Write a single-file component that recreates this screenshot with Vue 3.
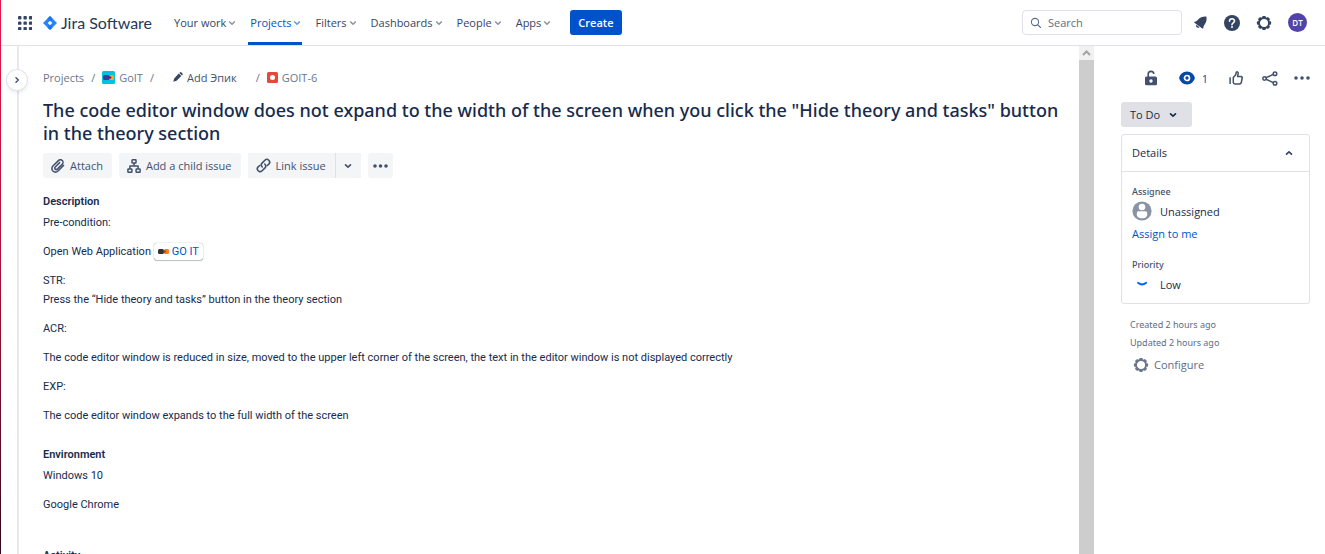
<script setup>
const nav = [
  { label: 'Your work' },
  { label: 'Projects', active: true },
  { label: 'Filters' },
  { label: 'Dashboards' },
  { label: 'People' },
  { label: 'Apps' },
]
const dots = [5, 12, 19]
const teeth = [0, 45, 90, 135, 180, 225, 270, 315]
</script>

<template>
  <div class="page">
    <header class="topbar">
      <button class="plain switcher" aria-label="App switcher">
        <svg width="14" height="14" viewBox="3 3 18 18">
          <template v-for="y in dots" :key="y">
            <rect v-for="x in dots" :key="x" :x="x - 2" :y="y - 2" width="4.4" height="4.4" rx="1.2" fill="#344563" />
          </template>
        </svg>
      </button>
      <a class="logo" href="#">
        <svg width="14" height="14" viewBox="0 0 14 14">
          <path d="M7 0 14 7 7 14 0 7Z" fill="#2684ff" />
          <path d="M7 0 4.4 2.6 7 5.2 9.6 2.6ZM7 14 9.6 11.4 7 8.8 4.4 11.4Z" fill="#1f74f2" />
          <path d="M7 4.7 9.3 7 7 9.3 4.7 7Z" fill="#fff" />
        </svg>
        <span>Jira Software</span>
      </a>
      <nav>
        <button v-for="n in nav" :key="n.label" class="plain nav-item" :class="{ active: n.active }">
          {{ n.label }}
          <svg width="8" height="6" viewBox="0 0 8 6"><path d="M1.2 1.500 4 4.300 6.800 1.500" /></svg>
        </button>
      </nav>
      <button class="create">Create</button>
      <label class="search">
        <svg width="12" height="12" viewBox="0 0 12 12" fill="none" stroke="#5e6c84" stroke-width="1.1" stroke-linecap="round">
          <circle cx="5" cy="5" r="3.6" /><path d="M7.8 7.8 10.5 10.5" />
        </svg>
        <input type="text" placeholder="Search" aria-label="Search" />
      </label>
      <div class="tools">
        <button class="plain" aria-label="Notifications">
          <svg width="15" height="15" viewBox="0 0 16 16" fill="#344563">
            <path d="M14.200 1.600C10.800 1.300 7.500 2.400 5.400 4.700 4 6.300 3.600 6.700 1.700 7.200 1.200 7.400 1.100 7.900 1.500 8.300L9.900 14.300C10.400 14.600 10.900 14.300 11 13.800 11.200 12 11.500 11.300 12.600 9.800 14.300 7.300 15 4.500 14.200 1.600Z" />
            <path d="M3.500 10.500 7 13C5.800 14 4.300 13.800 3.600 12.800 3.100 12.100 3.100 11.300 3.500 10.500Z" />
          </svg>
        </button>
        <button class="plain" aria-label="Help">
          <svg width="16" height="16" viewBox="0 0 16 16">
            <circle cx="8" cy="8" r="8" fill="#344563" />
            <path d="M5.500 6.300C5.500 2.900 10.500 3 10.500 6.100 10.500 8 8 7.900 8 9.700" fill="none" stroke="#fff" stroke-width="1.600" stroke-linecap="round" />
            <circle cx="8" cy="12.100" r="1" fill="#fff" />
          </svg>
        </button>
        <button class="plain" aria-label="Settings">
          <svg width="16" height="16" viewBox="0 0 16 16">
            <rect v-for="t in teeth" :key="t" x="6.200" y="0.900" width="3.600" height="2.600" rx="1" fill="#344563" :transform="`rotate(${t} 8 8)`" />
            <circle cx="8" cy="8" r="5" fill="none" stroke="#344563" stroke-width="1.900" />
          </svg>
        </button>
        <button class="avatar">DT</button>
      </div>
    </header>

    <div class="body">
      <div class="rail">
        <button class="expand" aria-label="Expand sidebar">
          <svg width="8" height="8" viewBox="0 0 8 8" fill="none" stroke="#42526e" stroke-width="1.500" stroke-linecap="round" stroke-linejoin="round"><path d="M3 1.700 5.300 4 3 6.300" /></svg>
        </button>
      </div>

      <main>
        <div class="crumbs">
          <a href="#">Projects</a>
          <i>/</i>
          <a href="#" class="project">
            <svg width="13" height="13" viewBox="0 0 13 13">
              <rect width="13" height="13" rx="1.500" fill="#00c1e0" />
              <rect x="1" y="4" width="7" height="5" rx="1.500" fill="#4137a8" />
              <rect x="7" y="4" width="5" height="5" rx="1.500" fill="#ffab00" />
              <circle cx="8" cy="6.500" r="1.300" fill="#5a2630" />
            </svg>
            GoIT
          </a>
          <i>/</i>
          <button class="plain epic">
            <svg width="10" height="10" viewBox="0 0 10 10" fill="#344563"><path d="M5.800 1.500 8.300 4 3.500 8.800 0.300 9.700 1.200 6.500ZM6.400 0.900 7.100 0.300Q7.700 -0.100 8.200 0.300L9.600 1.700Q10 2.300 9.600 2.800L8.900 3.400Z" /></svg>
            Add Эпик
          </button>
          <i>/</i>
          <a href="#" class="key">
            <svg width="11" height="11" viewBox="0 0 11 11"><rect width="11" height="11" rx="1.500" fill="#e5493a" /><circle cx="5.500" cy="5.500" r="2.500" fill="#fff" /></svg>
            GOIT-6
          </a>
        </div>

        <h1>The code editor window does not expand to the width of the screen when you click the "Hide theory and tasks" button in the theory section</h1>

        <div class="actions">
          <button class="act">
            <svg width="14" height="14" viewBox="0 0 14 14" fill="none" stroke="#42526e" stroke-width="1.500" stroke-linecap="round">
              <path d="M12.500 6.400 7.300 11.700C5.700 13.300 3.400 13.400 1.900 12 0.700 10.500 0.700 8.300 2.100 6.800L7.400 1.600C8.500 0.600 10.200 0.600 11.300 1.500 12.300 2.500 12.300 4.100 11.200 5.200L6.300 10.100C5.700 10.700 4.800 10.700 4.200 10.100 3.600 9.500 3.600 8.600 4.200 8L8.600 3.600" />
            </svg>
            Attach
          </button>
          <button class="act">
            <svg width="14" height="14" viewBox="0 0 14 14" fill="none" stroke="#42526e" stroke-width="1.500" stroke-linejoin="round">
              <rect x="5" y="0.800" width="4" height="3.200" rx="0.500" /><rect x="0.900" y="10" width="4" height="3.200" rx="0.500" /><rect x="9.100" y="10" width="4" height="3.200" rx="0.500" />
              <path d="M7 4V7M2.900 10V7H11.100V10" />
            </svg>
            Add a child issue
          </button>
          <div class="split">
            <button class="act">
              <svg width="15" height="15" viewBox="0 0 15 15" fill="none" stroke="#42526e" stroke-width="1.600" stroke-linecap="round">
                <path d="M6.300 9C5 7.800 5 6.200 6 5.100L8.900 2.200C10 1.100 11.700 1.100 12.800 2.200 13.900 3.300 13.900 5 12.800 6.100L11.300 7.500" />
                <path d="M8.700 6C10 7.200 10 8.800 9 9.900L6.100 12.800C5 13.900 3.300 13.900 2.200 12.800 1.100 11.700 1.100 10 2.200 8.900L3.700 7.500" />
              </svg>
              Link issue
            </button>
            <button class="act drop" aria-label="More link options">
              <svg width="8" height="6" viewBox="0 0 8 6" fill="none" stroke="#42526e" stroke-width="1.600" stroke-linecap="round" stroke-linejoin="round"><path d="M1.500 1.800 4 4.200 6.500 1.800" /></svg>
            </button>
          </div>
          <button class="act more" aria-label="More actions">
            <svg width="15" height="4" viewBox="0 0 15 4" fill="#42526e"><circle cx="2" cy="2" r="1.800" /><circle cx="7.500" cy="2" r="1.800" /><circle cx="13" cy="2" r="1.800" /></svg>
          </button>
        </div>

        <section>
          <h2>Description</h2>
          <p>Pre-condition:</p>
          <p>Open Web Application
            <a class="smart" href="#"><svg width="11" height="5" viewBox="0 0 11 5"><rect width="6" height="5" rx="1.500" fill="#333" /><rect x="6" width="5" height="5" rx="1.500" fill="#ff7a1a" /><circle cx="6.500" cy="2.500" r="1.300" fill="#8a4a28" /></svg>GO IT</a>
          </p>
          <p>STR:<br />Press the “Hide theory and tasks” button in the theory section</p>
          <p>ACR:</p>
          <p>The code editor window is reduced in size, moved to the upper left corner of the screen, the text in the editor window is not displayed correctly</p>
          <p>EXP:</p>
          <p>The code editor window expands to the full width of the screen</p>
        </section>
        <section>
          <h2>Environment</h2>
          <p>Windows 10</p>
          <p>Google Chrome</p>
        </section>
        <section class="activity">
          <h2>Activity</h2>
        </section>
      </main>

      <div class="scrollbar" aria-hidden="true">
        <div class="up"><svg width="9" height="6" viewBox="0 0 9 6" fill="none" stroke="#a3a3a3" stroke-width="2"><path d="M1 5 4.500 1.500 8 5" /></svg></div>
        <div class="thumb"></div>
      </div>

      <aside>
        <div class="side-tools">
          <button class="plain" aria-label="Restrictions">
            <svg width="12" height="16" viewBox="0 0 12 16"><path d="M3.200 7V4.100C3.200 0.500 8.800 0.500 8.800 4.100" fill="none" stroke="#42526e" stroke-width="1.600" /><path fill-rule="evenodd" d="M1.500 6.500H10.500Q12 6.500 12 8V13.800Q12 15.300 10.500 15.300H1.500Q0 15.300 0 13.800V8Q0 6.500 1.500 6.500ZM6 9.300A1.700 1.700 0 1 0 6 12.700 1.700 1.700 0 1 0 6 9.300Z" fill="#42526e" /></svg>
          </button>
          <button class="plain watch" aria-label="Watchers: 1">
            <svg width="16" height="14" viewBox="0 0 16 14"><path d="M8 0.600C12 0.600 14.600 3.400 15.700 6.300Q16 7 15.700 7.700C14.600 10.600 12 13.400 8 13.400S1.400 10.600 0.300 7.700Q0 7 0.300 6.300C1.400 3.400 4 0.600 8 0.600Z" fill="#0747a6" /><circle cx="8" cy="7" r="2.500" fill="none" stroke="#fff" stroke-width="1.700" /></svg>
            1
          </button>
          <button class="plain" aria-label="Vote">
            <svg width="14" height="14" viewBox="0 0 14 14" fill="none" stroke="#42526e" stroke-width="1.500" stroke-linejoin="round"><path d="M4.300 6.500 6.700 3.800 7.300 1.300C7.600 0.500 9.400 0.700 9.200 2.500L8.600 5.400H12Q13.400 5.500 13.200 7L12.300 11.500Q12 12.900 10.600 12.900H6Q4.300 12.900 4.300 11.500ZM1.100 6.300V13" /></svg>
          </button>
          <button class="plain share" aria-label="Share">
            <svg width="16" height="15" viewBox="0 0 16 15" fill="none" stroke="#42526e" stroke-width="1.500"><circle cx="2.500" cy="7.500" r="1.700" /><circle cx="13" cy="2.700" r="1.800" /><circle cx="13" cy="12.300" r="1.800" /><path d="M4 6.700 11.300 3.400M4 8.300 11.300 11.600" /></svg>
          </button>
          <button class="plain" aria-label="Actions">
            <svg width="16" height="4" viewBox="0 0 16 4" fill="#42526e"><circle cx="2" cy="2" r="1.800" /><circle cx="8" cy="2" r="1.800" /><circle cx="14" cy="2" r="1.800" /></svg>
          </button>
        </div>
        <button class="status">To Do
          <svg width="8" height="6" viewBox="0 0 8 6" fill="none" stroke="#172b4d" stroke-width="1.600" stroke-linecap="round" stroke-linejoin="round"><path d="M1.500 1.800 4 4.200 6.500 1.800" /></svg>
        </button>
        <div class="panel">
          <button class="plain panel-head">Details
            <svg width="8" height="6" viewBox="0 0 8 6" fill="none" stroke="#344563" stroke-width="1.600" stroke-linecap="round" stroke-linejoin="round"><path d="M1.500 4.200 4 1.800 6.500 4.200" /></svg>
          </button>
          <div class="panel-body">
            <h3>Assignee</h3>
            <div class="value">
              <svg width="20" height="20" viewBox="0 0 20 20"><circle cx="10" cy="10" r="9.600" fill="#8993a4" /><circle cx="10" cy="6" r="3.300" fill="#fff" /><path d="M4.800 12Q4.800 10.300 6.500 10.300H13.500Q15.200 10.300 15.200 12V14C14.500 17 12 17.300 10 17.300S5.500 17 4.800 14Z" fill="#fff" /></svg>
              Unassigned
            </div>
            <a class="assign" href="#">Assign to me</a>
            <h3 class="prio">Priority</h3>
            <div class="value low">
              <svg width="20" height="12" viewBox="0 0 20 12" fill="none" stroke="#0065ff" stroke-width="1.800" stroke-linecap="round"><path d="M6 4.800Q10 8.200 14.200 4.800" /></svg>
              Low
            </div>
          </div>
        </div>
        <div class="dates">
          <div>Created 2 hours ago</div>
          <div>Updated 2 hours ago</div>
        </div>
        <button class="plain configure">
          <svg width="16" height="16" viewBox="0 0 16 16">
            <rect v-for="t in teeth" :key="t" x="6.200" y="0.900" width="3.600" height="2.600" rx="1" fill="#6b778c" :transform="`rotate(${t} 8 8)`" />
            <circle cx="8" cy="8" r="5" fill="none" stroke="#6b778c" stroke-width="1.900" />
          </svg>
          Configure
        </button>
      </aside>
    </div>
  </div>
</template>

<style>
body { margin: 0; }
</style>

<style scoped>
* { box-sizing: border-box; }
.page {
  height: 100vh;
  display: flex;
  flex-direction: column;
  overflow: hidden;
  position: relative;
  padding-left: 1px;
  background: #fff;
  color: #172b4d;
  font: 11px/19px "Open Sans", "Noto Sans", sans-serif;
}
.page::before {
  content: "";
  position: absolute;
  left: 0;
  top: 0;
  bottom: 0;
  width: 1px;
  background: linear-gradient(#e5174b, #a31338 50%, #30081c);
}
svg { flex: none; display: block; }
button { font: inherit; cursor: pointer; }
a { color: inherit; text-decoration: none; }
.plain {
  border: 0;
  background: none;
  padding: 0;
  color: inherit;
  display: flex;
  align-items: center;
}
.topbar {
  height: 46px;
  flex: none;
  display: flex;
  align-items: center;
  border-bottom: 1px solid #dfe1e6;
  padding: 0 18px 0 17px;
}
.logo {
  display: flex;
  align-items: center;
  gap: 4px;
  margin: 0 20px 0 11px;
  font: 16px/20px Lato, sans-serif;
  color: #253858;
}
nav { display: flex; gap: 11px; align-self: stretch; }
.nav-item {
  gap: 2px;
  font-weight: 500;
  color: #344563;
  padding: 4px 1px 1px 2px;
  border-bottom: 3px solid transparent;
}
.nav-item svg { fill: none; stroke: #8993a4; stroke-width: 1.500; }
.nav-item.active { color: #0052cc; border-color: #0052cc; }
.nav-item.active svg { stroke: #6a97dc; }
.create {
  height: 25px;
  margin-left: 18px;
  padding: 0 8px;
  border: 0;
  border-radius: 3px;
  background: #0052cc;
  color: #fff;
  font-weight: 600;
}
.search {
  width: 160px;
  height: 25px;
  margin-left: auto;
  display: flex;
  align-items: center;
  gap: 6px;
  padding: 0 7px;
  border: 1px solid #dfe1e6;
  border-radius: 4px;
}
.search input {
  min-width: 0;
  flex: 1;
  border: 0;
  padding: 0;
  outline: 0;
  background: none;
  font: inherit;
  color: #172b4d;
}
.search input::placeholder { color: #5e6c84; opacity: 1; }
.tools { display: flex; align-items: center; gap: 16px; margin-left: 11px; }
.avatar {
  width: 19px;
  height: 19px;
  padding: 0;
  border: 0;
  border-radius: 50%;
  background: #5243aa;
  color: #fff;
  font-size: 8px;
  font-weight: 600;
  line-height: 19px;
}
.body { flex: 1; min-height: 0; display: flex; }
.rail {
  width: 18px;
  flex: none;
  position: relative;
  border-right: 2px solid #e8e9ec;
}
.expand {
  position: absolute;
  left: 6px;
  top: 24px;
  width: 20px;
  height: 20px;
  display: flex;
  align-items: center;
  justify-content: center;
  padding: 0;
  border: 0;
  border-radius: 50%;
  background: #fff;
  box-shadow: 0 0 0 1px #e4e6ea, 0 2px 4px #091e4222;
}
main { flex: 1; min-width: 0; padding: 21px 20px 0 24px; overflow: hidden; }
.crumbs { display: flex; align-items: center; height: 20px; color: #6b778c; }
.crumbs a { display: flex; align-items: center; gap: 4px; }
.crumbs i { font-style: normal; margin: 0 7px; }
.epic { gap: 4px; margin: 0 12px; color: #42526e; font-weight: 500; }
h1 { margin: 12px 0 8px; font: 500 18px/23px "Noto Sans", sans-serif; }
.actions { display: flex; gap: 7px; margin-bottom: 14px; }
.act {
  height: 25px;
  display: flex;
  align-items: center;
  gap: 5px;
  padding: 0 9px 0 8px;
  border: 0;
  border-radius: 3px;
  background: #f4f5f7;
  color: #42526e;
  font-weight: 500;
}
.split { display: flex; gap: 1px; border-radius: 3px; background: #dfe1e6; overflow: hidden; }
.split .act { border-radius: 0; }
.act.drop, .act.more { width: 25px; padding: 0; justify-content: center; }
section { font-family: Roboto, sans-serif; }
h2 { margin: 0 0 1px; font-size: 11px; line-height: 20px; font-weight: 600; }
p { margin: 0; }
p + p { margin-top: 10px; }
section + section { margin-top: 20px; }
section.activity { margin-top: 32px; }
.smart {
  padding: 2px 4px;
  border-radius: 3px;
  color: #0052cc;
  box-shadow: 0 0 1px #091e4290, 0 1px 1px #091e4240;
}
.smart svg { display: inline-block; margin-right: 3px; vertical-align: 1px; }
.scrollbar { width: 15px; flex: none; display: flex; flex-direction: column; }
.up { height: 14px; display: flex; align-items: center; justify-content: center; background: #f1f1f1; }
.thumb { flex: 1; background: #cdcdcd; }
aside { width: 231px; flex: none; padding: 22px 15px 0 27px; }
.side-tools {
  display: flex;
  align-items: center;
  justify-content: flex-end;
  height: 20px;
  gap: 16px;
}
.side-tools .watch { gap: 7px; color: #0747a6; margin: 0 5px 0 6px; }
.side-tools .share { margin-left: 3px; }
.status {
  height: 25px;
  display: flex;
  align-items: center;
  gap: 9px;
  margin: 14px 0 7px;
  padding: 0 15px 0 9px;
  border: 0;
  border-radius: 3px;
  background: #dfe1e6;
  color: #172b4d;
  font-weight: 500;
}
.panel { border: 1px solid #dfe1e6; border-radius: 3px; }
.panel-head {
  width: 100%;
  height: 37px;
  justify-content: space-between;
  padding: 0 16px 1px 10px;
  border-bottom: 1px solid #dfe1e6;
  font-weight: 500;
}
.panel-body { padding: 12px 10px 8px; }
h3 { margin: 0; font: 500 9px/16px "Noto Sans", sans-serif; color: #42526e; }
.value { display: flex; align-items: center; gap: 8px; height: 22px; }
.assign { display: block; line-height: 24px; color: #0052cc; }
h3.prio { margin-top: 11px; }
.dates { margin: 12px 9px 3px; font: 9px/18px "Noto Sans", sans-serif; color: #5e6c84; }
.configure { gap: 5px; margin-left: 12px; color: #5e6c84; font-weight: 500; }
</style>
